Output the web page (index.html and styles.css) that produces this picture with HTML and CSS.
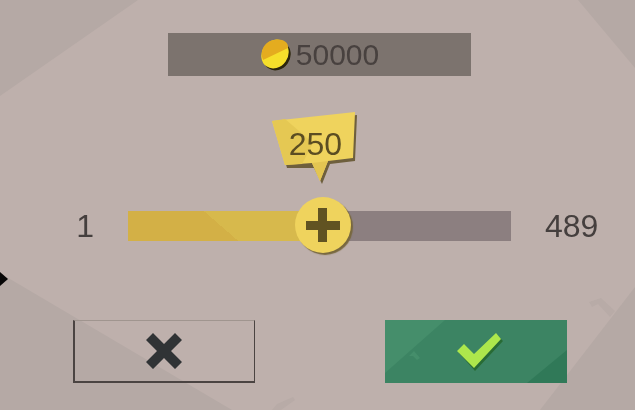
FILE: index.html
```html
<!DOCTYPE html>
<html lang="en">
<head>
    <meta charset="UTF-8">
    <meta name="viewport" content="width=device-width, initial-scale=1.0">
    <title>Choose Amount</title>
    <link rel="stylesheet" href="styles.css">
</head>
<body>
    <svg class="backdrop" viewBox="0 0 635 410" preserveAspectRatio="none" aria-hidden="true">
        <g fill="#b5a9a5">
            <path d="M0 0H138L0 96Z"/>
            <path d="M578 0H635V68Z"/>
            <path d="M0 274L10 279L232 410H0Z"/>
            <path d="M635 287V410H540Z"/>
        </g>
        <g fill="#b8aba7">
            <path d="M589 302L601 298L615 311L610 317L598 304L592 307Z"/>
            <path d="M272 410L277 404L293 397L295 400L281 410Z"/>
        </g>
        <path d="M0 272L8 279L0 286Z" fill="#080707"/>
    </svg>

    <form class="dialog">
        <div class="price">
            <svg class="coin" viewBox="0 0 32 34" aria-hidden="true">
                <ellipse cx="17" cy="18" rx="13" ry="15" transform="rotate(35 17 18)" fill="#2b250c"/>
                <ellipse cx="15" cy="16" rx="13" ry="15" transform="rotate(35 15 16)" fill="#f6df2b"/>
                <path d="M3 22C-1 13 5 3 14 2C23 0 29 5 28 10Z" fill="#e4ac1f"/>
            </svg>
            <span>50000</span>
        </div>

        <div class="slider-row">
            <span class="min">1</span>
            <div class="slider">
                <output class="balloon" for="amount">
                    <svg viewBox="0 0 86 72" aria-hidden="true">
                        <path d="M3 12L85 3L83 49L58 52L50 72L42 56L15 56Z" fill="#6e5f3d"/>
                        <path d="M0 9L83 0L81 46L56 49L48 69L40 51L13 53Z" fill="#efd35d"/>
                        <path d="M0 9L13 7L41 31L30 52L13 53Z" fill="#e5c853"/>
                        <path d="M40 51L56 49L48 69Z" fill="#e3c552"/>
                    </svg>
                    <span>250</span>
                </output>
                <input type="range" id="amount" name="amount" min="1" max="489" value="250" aria-label="Amount">
            </div>
            <span class="max">489</span>
        </div>

        <div class="actions">
            <button type="button" class="cancel" aria-label="Cancel">
                <svg class="icon" viewBox="0 0 36 36" aria-hidden="true">
                    <path d="M0 7L7 0L18 11L29 0L36 7L25 18L36 29L29 36L18 25L7 36L0 29L11 18Z" fill="#303335"/>
                </svg>
            </button>
            <button type="submit" class="confirm" aria-label="Confirm">
                <svg class="facets" viewBox="0 0 182 63" preserveAspectRatio="none" aria-hidden="true">
                    <path d="M0 0H60L0 53Z" fill="#458e6b"/>
                    <path d="M24 36L29 31L35 38L32 40L28 36Z" fill="#458e6b"/>
                    <path d="M182 30V63H142Z" fill="#307958"/>
                </svg>
                <svg class="check" viewBox="0 0 46 38" aria-hidden="true">
                    <path d="M2 20L8 14L18 24L40 2L46 8L18 38Z" fill="#286b35"/>
                    <path d="M0 18L7 11L17 21L39 0L44 6L17 35Z" fill="#ade74c"/>
                </svg>
            </button>
        </div>
    </form>
</body>
</html>
```

FILE: styles.css
```css
* {
    box-sizing: border-box;
}

body {
    margin: 0;
    min-height: 100vh;
    background-color: #beb0ac;
    color: #453f3e;
    font-family: "Liberation Sans", Arial, sans-serif;
    font-size: 32px;
    line-height: 32px;
}

.backdrop {
    position: fixed;
    inset: 0;
    width: 100%;
    height: 100%;
    z-index: -1;
}

.dialog {
    display: flex;
    flex-direction: column;
    align-items: center;
    padding: 33px 0 24px 4px;
}

.price {
    display: flex;
    justify-content: center;
    align-items: center;
    gap: 4px;
    width: 48%;
    height: 43px;
    background-color: #7c736e;
    color: #48413f;
    font-size: 30px;
}

.coin {
    width: 32px;
    height: 34px;
}

.slider-row {
    display: grid;
    grid-template-columns: minmax(0, 1fr) minmax(0, 383px) minmax(0, 1fr);
    align-items: center;
    column-gap: 34px;
    width: 100%;
    margin-top: 122px;
}

.min {
    text-align: right;
}

.slider {
    position: relative;
    height: 56px;
}

.slider input {
    appearance: none;
    display: block;
    width: 100%;
    height: 56px;
    margin: 0;
    background: none;
    cursor: pointer;
}

.slider input::-webkit-slider-runnable-track {
    height: 30px;
    background:
        linear-gradient(41deg, #d3b046 48%, #d7b94c 48%) left / 51% 100% no-repeat,
        #8c7f80;
}

.slider input::-webkit-slider-thumb {
    appearance: none;
    width: 56px;
    height: 56px;
    margin-top: -14px;
    border-radius: 50%;
    background:
        linear-gradient(#615322, #615322) center / 34px 9px no-repeat,
        linear-gradient(#615322, #615322) center / 9px 34px no-repeat,
        #efd35d;
    box-shadow: 2px 2px 1px #78683f;
}

/* speech balloon over the thumb */
.balloon {
    position: absolute;
    bottom: 100%;
    left: 51%;
    width: 86px;
    height: 72px;
    margin: 0 0 14px -51px;
    padding-top: 16px;
    color: #5b4d22;
    text-align: center;
}

.balloon svg {
    position: absolute;
    inset: 0;
    z-index: -1;
}

.actions {
    display: flex;
    justify-content: center;
    gap: 130px;
    width: 100%;
    margin-top: 66px;
}

.actions button {
    display: flex;
    justify-content: center;
    align-items: center;
    position: relative;
    width: 182px;
    height: 63px;
    padding: 0;
    border: none;
    cursor: pointer;
}

.actions .cancel {
    background: none;
    border: 2px solid #4b4442;
    border-top: 1px solid #a0958f;
    border-right-width: 1px;
}

.actions .confirm {
    padding-left: 8px;
    background-color: #3c8463;
}

.facets {
    position: absolute;
    inset: 0;
    width: 100%;
    height: 100%;
}

.icon {
    width: 36px;
    height: 36px;
}

.check {
    position: relative;
    width: 46px;
    height: 38px;
}
```
